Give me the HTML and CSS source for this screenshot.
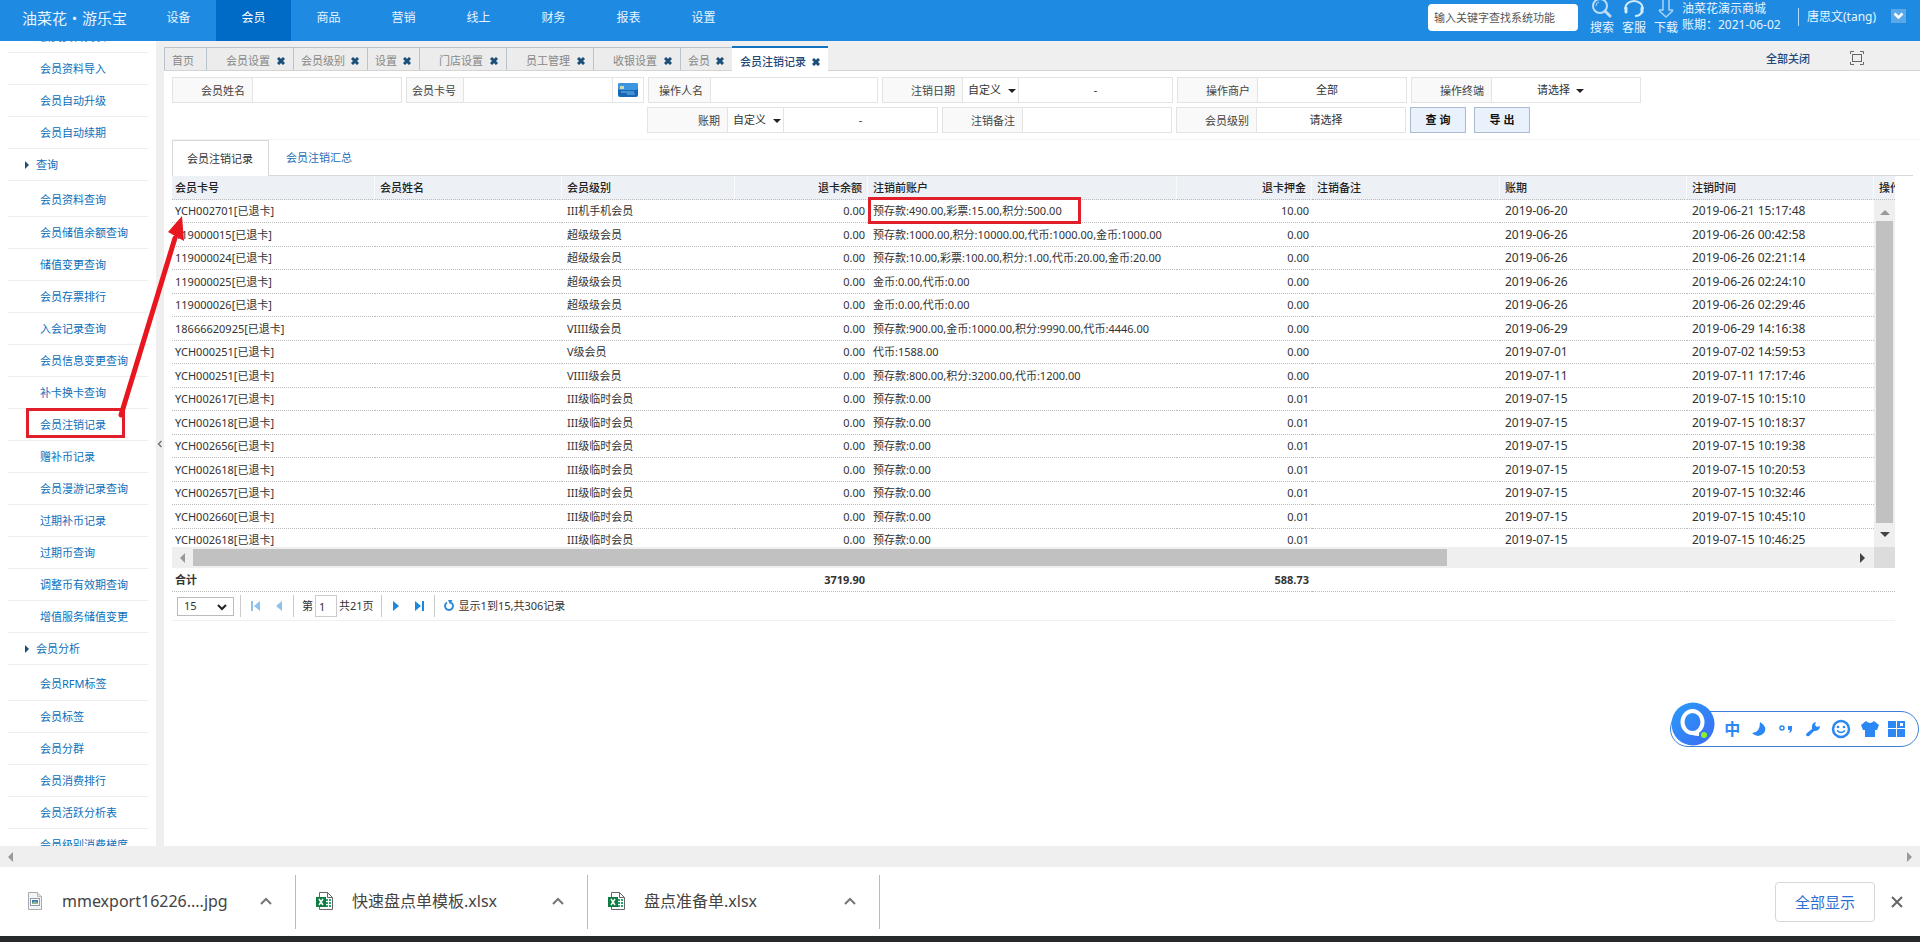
FILE: index.html
```html
<!DOCTYPE html>
<html lang="zh-CN">
<head>
<meta charset="utf-8">
<title>会员注销记录</title>
<link rel="stylesheet" href="styles.css">
</head>
<body>
<header class="topbar">
  <div class="logo">油菜花・游乐宝</div>
  <nav class="mainnav">
    <a href="#">设备</a><a href="#" class="on">会员</a><a href="#">商品</a><a href="#">营销</a><a href="#">线上</a><a href="#">财务</a><a href="#">报表</a><a href="#">设置</a>
  </nav>
  <input class="sysfind" type="text" placeholder="输入关键字查找系统功能" aria-label="查找系统功能">
  <div class="tools">
    <button type="button"><svg width="22" height="18" viewBox="0 0 22 18"><g fill="none" stroke="#b9ddf8"><circle cx="9" cy="6" r="7" stroke-width="2"/><path d="M14 11l5 5" stroke-width="3" stroke-linecap="round"/><path d="M5 6a4 4 0 0 1 3-4"/></g></svg>搜索</button>
    <button type="button"><svg width="22" height="18" viewBox="0 0 22 18"><g fill="none" stroke="#d5ebfb" stroke-width="2"><path d="M2 9a9 8 0 0 1 18 0"/><path d="M3 8v4M19 8v4" stroke-width="3" stroke-linecap="round"/><path d="M19 12q-2 4-7 4"/></g></svg>客服</button>
    <button type="button"><svg width="22" height="18" viewBox="0 0 22 18"><path d="M8 -2v12H4.500l0 1 6.500 6 6.500-6v-1H14V-2" fill="none" stroke="#a8d5f7" stroke-width="1.500" stroke-linejoin="round"/></svg>下载</button>
  </div>
  <div class="mall"><span>油菜花演示商城</span><span>账期：2021-06-02</span></div>
  <div class="user">唐思文(tang)</div>
  <button type="button" class="userdrop" aria-label="用户菜单"><svg width="15" height="14" viewBox="0 0 15 14"><path d="M3.500 4.500l4 4 4-4" fill="none" stroke="#fff" stroke-width="2.500"/></svg></button>
</header>

<div class="workspace">
  <aside class="side">
    <ul class="menu">
      <li><a href="#">会员资料列表</a></li>
      <li><a href="#">会员资料导入</a></li>
      <li><a href="#">会员自动升级</a></li>
      <li><a href="#">会员自动续期</a></li>
      <li class="group"><a href="#">查询</a></li>
      <li><a href="#">会员资料查询</a></li>
      <li><a href="#">会员储值余额查询</a></li>
      <li><a href="#">储值变更查询</a></li>
      <li><a href="#">会员存票排行</a></li>
      <li><a href="#">入会记录查询</a></li>
      <li><a href="#">会员信息变更查询</a></li>
      <li><a href="#">补卡换卡查询</a></li>
      <li><a href="#">会员注销记录</a></li>
      <li><a href="#">赠补币记录</a></li>
      <li><a href="#">会员漫游记录查询</a></li>
      <li><a href="#">过期补币记录</a></li>
      <li><a href="#">过期币查询</a></li>
      <li><a href="#">调整币有效期查询</a></li>
      <li><a href="#">增值服务储值变更</a></li>
      <li class="group"><a href="#">会员分析</a></li>
      <li><a href="#">会员RFM标签</a></li>
      <li><a href="#">会员标签</a></li>
      <li><a href="#">会员分群</a></li>
      <li><a href="#">会员消费排行</a></li>
      <li><a href="#">会员活跃分析表</a></li>
      <li><a href="#">会员级别消费梯度</a></li>
    </ul>
  </aside>
  <button type="button" class="splitter" aria-label="收起菜单"><svg width="6" height="8" viewBox="0 0 6 8"><path d="M4.500 1L1.500 4l3 3" fill="none" stroke="#777" stroke-width="1.500"/></svg></button>

  <main class="content">
    <div class="tabs">
      <div class="tab">首页</div>
      <div class="tab wide">会员设置<button type="button" aria-label="关闭"><svg width="8" height="8" viewBox="0 0 8 8"><path d="M1 1l6 6M7 1L1 7"/></svg></button></div>
      <div class="tab">会员级别<button type="button" aria-label="关闭"><svg width="8" height="8" viewBox="0 0 8 8"><path d="M1 1l6 6M7 1L1 7"/></svg></button></div>
      <div class="tab">设置<button type="button" aria-label="关闭"><svg width="8" height="8" viewBox="0 0 8 8"><path d="M1 1l6 6M7 1L1 7"/></svg></button></div>
      <div class="tab wide">门店设置<button type="button" aria-label="关闭"><svg width="8" height="8" viewBox="0 0 8 8"><path d="M1 1l6 6M7 1L1 7"/></svg></button></div>
      <div class="tab wide">员工管理<button type="button" aria-label="关闭"><svg width="8" height="8" viewBox="0 0 8 8"><path d="M1 1l6 6M7 1L1 7"/></svg></button></div>
      <div class="tab wide">收银设置<button type="button" aria-label="关闭"><svg width="8" height="8" viewBox="0 0 8 8"><path d="M1 1l6 6M7 1L1 7"/></svg></button></div>
      <div class="tab">会员<button type="button" aria-label="关闭"><svg width="8" height="8" viewBox="0 0 8 8"><path d="M1 1l6 6M7 1L1 7"/></svg></button></div>
      <div class="tab current">会员注销记录<button type="button" aria-label="关闭"><svg width="8" height="8" viewBox="0 0 8 8"><path d="M1 1l6 6M7 1L1 7"/></svg></button></div>
      <a href="#" class="closeall">全部关闭</a>
      <button type="button" class="full" aria-label="全屏"><svg width="14" height="14" viewBox="0 0 14 14"><g fill="none" stroke="#666"><path d="M.5 3V.5H4M10 .5h3.500V3M13.500 11v2.500H10M4 13.500H.5V11"/><rect x="2.500" y="3.500" width="9" height="7"/></g></svg></button>
    </div>

    <form class="filters">
      <div class="frow">
        <div class="field"><label class="l79" for="f1">会员姓名</label><input class="w150" id="f1" type="text"></div>
        <div class="field"><label class="l57" for="f2">会员卡号</label><input class="w150" id="f2" type="text"><button type="button" class="card" aria-label="读卡"><svg width="20" height="14" viewBox="0 0 20 14"><rect width="20" height="14" rx="2" fill="#1668b4"/><rect y="0" width="20" height="7" rx="2" fill="#3b97e0"/><rect x="2" y="3" width="4" height="3" fill="#d8d9a8"/><path d="M3 9h13M9 11h8" stroke="#73b9f0"/></svg></button></div>
        <div class="field"><label class="l62" for="f3">操作人名</label><input class="w168" id="f3" type="text"></div>
        <div class="field"><label class="l80" for="f4">注销日期</label><span class="pick mode"><select id="f4"><option>自定义</option></select></span><span class="range"><input type="text" aria-label="注销日期起"><span>-</span><input type="text" aria-label="注销日期止"></span></div>
        <div class="field"><label class="l80" for="f5">操作商户</label><button type="button" class="choose" id="f5">全部</button></div>
        <div class="field"><label class="l80" for="f6">操作终端</label><span class="pick terminal"><select id="f6"><option>请选择</option></select></span></div>
      </div>
      <div class="frow second">
        <div class="field"><label class="l80" for="f7">账期</label><span class="pick mode"><select id="f7"><option>自定义</option></select></span><span class="range"><input type="text" aria-label="账期起"><span>-</span><input type="text" aria-label="账期止"></span></div>
        <div class="field"><label class="l80" for="f8">注销备注</label><input class="w150" id="f8" type="text"></div>
        <div class="field"><label class="l80" for="f9">会员级别</label><button type="button" class="choose" id="f9">请选择</button></div>
        <div class="acts"><button type="button">查 询</button><button type="button">导 出</button></div>
      </div>
    </form>

    <div class="subtabs"><a href="#" class="on">会员注销记录</a><a href="#">会员注销汇总</a></div>

    <section class="grid">
      <table class="cols head">
        <colgroup><col class="c1"><col class="c2"><col class="c3"><col class="c4"><col class="c5"><col class="c6"><col class="c7"><col class="c8"><col class="c8"><col class="c9"></colgroup>
        <thead><tr><th>会员卡号</th><th>会员姓名</th><th>会员级别</th><th class="num">退卡余额</th><th>注销前账户</th><th class="num">退卡押金</th><th>注销备注</th><th>账期</th><th>注销时间</th><th>操作</th></tr></thead>
      </table>
      <div class="scroller">
        <div class="view">
          <table class="cols rows">
            <colgroup><col class="c1"><col class="c2"><col class="c3"><col class="c4"><col class="c5"><col class="c6"><col class="c7"><col class="c8"><col class="c8"></colgroup>
            <tbody>
              <tr><td>YCH002701[已退卡]</td><td></td><td>III机手机会员</td><td class="num">0.00</td><td>预存款:490.00,彩票:15.00,积分:500.00</td><td class="num">10.00</td><td></td><td class="date">2019-06-20</td><td class="date">2019-06-21 15:17:48</td></tr>
              <tr><td>119000015[已退卡]</td><td></td><td>超级级会员</td><td class="num">0.00</td><td>预存款:1000.00,积分:10000.00,代币:1000.00,金币:1000.00</td><td class="num">0.00</td><td></td><td class="date">2019-06-26</td><td class="date">2019-06-26 00:42:58</td></tr>
              <tr><td>119000024[已退卡]</td><td></td><td>超级级会员</td><td class="num">0.00</td><td>预存款:10.00,彩票:100.00,积分:1.00,代币:20.00,金币:20.00</td><td class="num">0.00</td><td></td><td class="date">2019-06-26</td><td class="date">2019-06-26 02:21:14</td></tr>
              <tr><td>119000025[已退卡]</td><td></td><td>超级级会员</td><td class="num">0.00</td><td>金币:0.00,代币:0.00</td><td class="num">0.00</td><td></td><td class="date">2019-06-26</td><td class="date">2019-06-26 02:24:10</td></tr>
              <tr><td>119000026[已退卡]</td><td></td><td>超级级会员</td><td class="num">0.00</td><td>金币:0.00,代币:0.00</td><td class="num">0.00</td><td></td><td class="date">2019-06-26</td><td class="date">2019-06-26 02:29:46</td></tr>
              <tr><td>18666620925[已退卡]</td><td></td><td>VIIII级会员</td><td class="num">0.00</td><td>预存款:900.00,金币:1000.00,积分:9990.00,代币:4446.00</td><td class="num">0.00</td><td></td><td class="date">2019-06-29</td><td class="date">2019-06-29 14:16:38</td></tr>
              <tr><td>YCH000251[已退卡]</td><td></td><td>V级会员</td><td class="num">0.00</td><td>代币:1588.00</td><td class="num">0.00</td><td></td><td class="date">2019-07-01</td><td class="date">2019-07-02 14:59:53</td></tr>
              <tr><td>YCH000251[已退卡]</td><td></td><td>VIIII级会员</td><td class="num">0.00</td><td>预存款:800.00,积分:3200.00,代币:1200.00</td><td class="num">0.00</td><td></td><td class="date">2019-07-11</td><td class="date">2019-07-11 17:17:46</td></tr>
              <tr><td>YCH002617[已退卡]</td><td></td><td>III级临时会员</td><td class="num">0.00</td><td>预存款:0.00</td><td class="num">0.01</td><td></td><td class="date">2019-07-15</td><td class="date">2019-07-15 10:15:10</td></tr>
              <tr><td>YCH002618[已退卡]</td><td></td><td>III级临时会员</td><td class="num">0.00</td><td>预存款:0.00</td><td class="num">0.01</td><td></td><td class="date">2019-07-15</td><td class="date">2019-07-15 10:18:37</td></tr>
              <tr><td>YCH002656[已退卡]</td><td></td><td>III级临时会员</td><td class="num">0.00</td><td>预存款:0.00</td><td class="num">0.01</td><td></td><td class="date">2019-07-15</td><td class="date">2019-07-15 10:19:38</td></tr>
              <tr><td>YCH002618[已退卡]</td><td></td><td>III级临时会员</td><td class="num">0.00</td><td>预存款:0.00</td><td class="num">0.01</td><td></td><td class="date">2019-07-15</td><td class="date">2019-07-15 10:20:53</td></tr>
              <tr><td>YCH002657[已退卡]</td><td></td><td>III级临时会员</td><td class="num">0.00</td><td>预存款:0.00</td><td class="num">0.01</td><td></td><td class="date">2019-07-15</td><td class="date">2019-07-15 10:32:46</td></tr>
              <tr><td>YCH002660[已退卡]</td><td></td><td>III级临时会员</td><td class="num">0.00</td><td>预存款:0.00</td><td class="num">0.01</td><td></td><td class="date">2019-07-15</td><td class="date">2019-07-15 10:45:10</td></tr>
              <tr><td>YCH002618[已退卡]</td><td></td><td>III级临时会员</td><td class="num">0.00</td><td>预存款:0.00</td><td class="num">0.01</td><td></td><td class="date">2019-07-15</td><td class="date">2019-07-15 10:46:25</td></tr>
            </tbody>
          </table>
        </div>
        <div class="vbar"><i class="up"></i><b></b><i class="down"></i></div>
        <div class="hbar"><i class="left"></i><div class="track"><b></b></div><i class="right dark"></i></div>
        <div class="corner"></div>
      </div>
      <table class="cols foot">
        <colgroup><col class="c1"><col class="c2"><col class="c3"><col class="c4"><col class="c5"><col class="c6"><col class="c7"><col class="c8"><col class="c8"><col class="c9"></colgroup>
        <tbody><tr><td>合计</td><td></td><td></td><td class="num">3719.90</td><td></td><td class="num">588.73</td><td></td><td></td><td></td><td></td></tr></tbody>
      </table>
      <div class="pager">
        <span class="size"><select aria-label="每页条数"><option>15</option></select><svg width="10" height="8" viewBox="0 0 10 8"><path d="M1 2l4 4 4-4" fill="none" stroke="#222" stroke-width="2"/></svg></span>
        <span class="nav off"><button type="button" aria-label="第一页"><svg width="10" height="10" viewBox="0 0 10 10"><path d="M1 0h2v10H1zM10 0v10L4 5z"/></svg></button><button type="button" aria-label="上一页"><svg width="10" height="10" viewBox="0 0 10 10"><path d="M8 0v10L2 5z"/></svg></button></span>
        <label class="page">第<input type="text" value="1">共21页</label>
        <span class="nav"><button type="button" aria-label="下一页"><svg width="10" height="10" viewBox="0 0 10 10"><path d="M2 0v10l6-5z"/></svg></button><button type="button" aria-label="最后一页"><svg width="10" height="10" viewBox="0 0 10 10"><path d="M0 0v10l6-5zM7 0h2v10H7z"/></svg></button></span>
        <button type="button" class="reload" aria-label="刷新"><svg width="12" height="12" viewBox="0 0 12 12"><path d="M4 2.500a4 4 0 1 0 4 0" fill="none" stroke="#2c8ad8" stroke-width="2"/><path d="M5 0h4.500L7 4.500z" fill="#2c8ad8"/></svg></button>
        <span>显示1到15,共306记录</span>
      </div>
    </section>
  </main>
</div>

<div class="pagebar"><i class="left"></i><i class="right"></i></div>

<footer class="downloads">
  <div class="file">
    <svg width="18" height="20" viewBox="0 0 18 20"><path d="M2.500 1.500h9l4 4v13h-13z" fill="#f4f4f4" stroke="#aaa"/><path d="M11.500 1.500v4h4" fill="#ddd" stroke="#bbb"/><rect x="4.500" y="7.500" width="9" height="7" fill="#fff" stroke="#8a9bb0"/><rect x="6" y="9" width="6" height="4" fill="#3b78b5"/><path d="M6 12l3-2 3 2v1H6z" fill="#8fb98b"/></svg>
    <span>mmexport16226....jpg</span>
    <button type="button" aria-label="更多"><svg width="12" height="8" viewBox="0 0 12 8"><path d="M1 7l5-5 5 5"/></svg></button>
  </div>
  <div class="file">
    <svg width="18" height="20" viewBox="0 0 18 20"><path d="M3.500 1.500h8l5 5v12h-13z" fill="#fff" stroke="#666"/><path d="M11.500 1.500v5h5" fill="none" stroke="#666"/><path d="M10 8h2v2h-2zM13 8h2v2h-2zM10 11h2v2h-2zM13 11h2v2h-2zM10 14h2v2h-2zM13 14h2v2h-2z" fill="#26a46a"/><rect y="6" width="10" height="10" fill="#107c41"/><path d="M3 8l4 6M7 8l-4 6" stroke="#fff" stroke-width="1.500"/></svg>
    <span>快速盘点单模板.xlsx</span>
    <button type="button" aria-label="更多"><svg width="12" height="8" viewBox="0 0 12 8"><path d="M1 7l5-5 5 5"/></svg></button>
  </div>
  <div class="file">
    <svg width="18" height="20" viewBox="0 0 18 20"><path d="M3.500 1.500h8l5 5v12h-13z" fill="#fff" stroke="#666"/><path d="M11.500 1.500v5h5" fill="none" stroke="#666"/><path d="M10 8h2v2h-2zM13 8h2v2h-2zM10 11h2v2h-2zM13 11h2v2h-2zM10 14h2v2h-2zM13 14h2v2h-2z" fill="#26a46a"/><rect y="6" width="10" height="10" fill="#107c41"/><path d="M3 8l4 6M7 8l-4 6" stroke="#fff" stroke-width="1.500"/></svg>
    <span>盘点准备单.xlsx</span>
    <button type="button" aria-label="更多"><svg width="12" height="8" viewBox="0 0 12 8"><path d="M1 7l5-5 5 5"/></svg></button>
  </div>
  <button type="button" class="showall">全部显示</button>
  <button type="button" class="dismiss" aria-label="关闭"><svg width="12" height="12" viewBox="0 0 12 12"><path d="M1 1l10 10M11 1L1 11" stroke="#666" stroke-width="2"/></svg></button>
</footer>
<div class="taskbar"></div>

<div class="ime">
  <svg class="imelogo" width="44" height="44" viewBox="0 0 44 44"><defs><linearGradient id="q" x1="0" y1="0" x2="1" y2="1"><stop offset="0" stop-color="#2a9df8"/><stop offset="1" stop-color="#3b6af5"/></linearGradient></defs><circle cx="22" cy="22" r="21.500" fill="url(#q)"/><ellipse cx="21.500" cy="20" rx="10" ry="11" fill="none" stroke="#fff" stroke-width="4"/><path d="M15 30q6 4 13 4v-5z" fill="#fff"/><circle cx="33" cy="33" r="4" fill="#3a73f0"/><circle cx="33" cy="33" r="3" fill="#8dee2a"/></svg>
  <span class="zh">中</span>
  <svg width="18" height="18" viewBox="0 0 18 18"><path d="M10 2q8 5 4 11-6 6-12 0 8 0 8-11z"/></svg>
  <svg width="18" height="18" viewBox="0 0 18 18"><circle cx="5" cy="8" r="2" fill="none" stroke="#2b87f3" stroke-width="1.500"/><path d="M11 6h4v3q0 3-3 4 1-2 1-3h-2z"/></svg>
  <svg width="18" height="18" viewBox="0 0 18 18"><path d="M12 2l-1 3 2 2 3-1q0 5-6 5l-5 5q-2 1-3-1 0-1 1-2l5-4q-1-6 4-7z"/></svg>
  <svg width="20" height="20" viewBox="0 0 20 20"><circle cx="10" cy="10" r="8" fill="none" stroke="#2b87f3" stroke-width="2.500"/><circle cx="7" cy="8" r="1.300"/><circle cx="13" cy="8" r="1.300"/><path d="M6 11.500q4 4 8 0" fill="none" stroke="#2b87f3" stroke-width="1.500"/></svg>
  <svg width="18" height="18" viewBox="0 0 18 18"><path d="M5 1q4 4 8 0l5 4-2 5h-2v7H4v-7H2L0 5z"/></svg>
  <svg width="18" height="18" viewBox="0 0 18 18"><path d="M0 1h8v7H0zM9 1h8v7H9zM0 9h8v8H0zM9 9h8v8H9z"/><path d="M12 3h3v3h-3z" fill="#fff"/></svg>
</div>

<svg class="marks" width="1090" height="450" viewBox="0 0 1090 450">
  <g fill="none" stroke="#e01f2b" stroke-width="3"><rect x="27.500" y="409.500" width="96" height="27"/><rect x="869.500" y="198.500" width="210" height="24"/></g>
  <path d="M121 415L175 238" stroke="#e8161f" stroke-width="5" stroke-linecap="round"/>
  <path d="M182 216l2 25-16-9z" fill="#e8161f"/>
</svg>
</body>
</html>
```
FILE: styles.css
```css
* { box-sizing: border-box; }
body {
  margin: 0;
  height: 100vh;
  display: flex;
  flex-direction: column;
  overflow: hidden;
  background: #fff;
  color: #333;
  font: 11px/16px "Noto Sans", "Noto Sans CJK SC", sans-serif;
}
a { color: inherit; text-decoration: none; }
button, input, select { font: inherit; color: inherit; margin: 0; padding: 0; border: 0; background: none; border-radius: 0; }
select { appearance: none; }
svg { display: block; flex: none; }

/* top bar */
.topbar { flex: none; height: 41px; display: flex; background: #1e8ae2; color: #e6f4ff; font-size: 12px; overflow: hidden; }
.logo { width: 141px; padding: 9px 0 0 22px; font-size: 15px; line-height: 18px; white-space: nowrap; }
.mainnav { display: flex; flex: 1; }
.mainnav a { width: 75px; line-height: 35px; text-align: center; }
.mainnav .on { background: #006bc7; color: #fff; }
.sysfind { width: 150px; height: 27px; margin-top: 4px; padding: 0 6px; border-radius: 4px; background: #fff; color: #555; font-size: 11px; }
.sysfind::placeholder { color: #555; }
.tools { display: flex; gap: 8px; margin-left: 12px; }
.tools button { width: 24px; display: flex; flex-direction: column; align-items: center; gap: 2px; font-size: 12px; line-height: 16px; white-space: nowrap; }
.mall { width: 116px; margin-left: 4px; display: flex; flex-direction: column; white-space: nowrap; padding-top: 1px; }
.user { align-self: flex-start; margin-top: 8px; padding-left: 8px; width: 91px; border-left: 1px solid #b5dcfa; font-size: 12px; line-height: 18px; }
.userdrop { width: 15px; height: 14px; margin: 9px 14px 0 2px; background: #5ba8e9; }

/* work area */
.workspace { flex: 1; min-height: 0; display: flex; }
.side { width: 156px; overflow: hidden; }
.menu { list-style: none; margin: -20px 8px 0; padding: 0; color: #0b6fba; }
.menu li { height: 32px; padding-left: 32px; border-bottom: 1px solid #eee; line-height: 32px; white-space: nowrap; }
.menu .group { position: relative; padding-left: 28px; }
.menu .group::before { content: ""; position: absolute; left: 17px; top: 12px; border: 4px solid transparent; border-left-color: #1c4f78; border-right: 0; }
.menu .group + li { height: 36px; line-height: 38px; }
.splitter { width: 8px; background: #efefef; display: flex; align-items: center; justify-content: center; }
.content { flex: 1; min-width: 0; }

.tabs { height: 30px; padding-top: 5px; display: flex; background: #efefef; border-bottom: 1px solid #d4d4d4; }
.tab { display: flex; align-items: center; gap: 6px; margin-top: 1px; padding: 4px 8px 0 7px; border: 1px solid #b9c3cb; border-width: 1px 0 0 1px; color: #888; background: #ececec; white-space: nowrap; }
.tab:first-child { width: 42px; }
.tab.wide { padding-left: 19px; gap: 7px; }
.tab button { stroke: #1c4f78; stroke-width: 3; }
.tab.current { margin: 0 0 -1px; padding-left: 8px; border: 0; border-top: 2px solid #1273c2; background: #fff; color: #23487a; font-weight: 500; }
.closeall { margin-left: auto; color: #23487a; line-height: 26px; font-weight: 500; }
.full { width: 14px; margin: 0 56px 0 40px; }

/* filters */
.filters { margin-left: 8px; padding: 6px 0; display: flex; flex-direction: column; gap: 4px; border-bottom: 1px solid #f3f3f3; }
.frow { display: flex; gap: 4px; }
.second { padding-left: 475px; }
.field { display: flex; height: 26px; border: 1px solid #e3e3e3; background: #f9f9f9; }
.field label { padding-right: 7px; line-height: 25px; text-align: right; color: #444; }
.field input, .field > button, .field > span { background: #fff; border-left: 1px solid #e3e3e3; }
.l79, .l80 { width: 79px; }
.l57 { width: 56px; }
.l62 { width: 61px; }
.w150, .choose, .terminal { width: 149px; }
.w168 { width: 167px; }
.field > .choose { padding-right: 10px; }
.card { width: 31px; display: flex; align-items: center; justify-content: center; }
.pick { position: relative; }
.pick select { width: 100%; height: 24px; padding-left: 5px; }
.pick::after { content: ""; position: absolute; right: 2px; top: 11px; border: 4px solid transparent; border-top-color: #222; border-bottom: 0; pointer-events: none; }
.mode { width: 56px; }
.terminal select { padding-left: 45px; }
.terminal::after { right: 56px; }
.range { width: 154px; display: flex; align-items: center; }
.field .range input { flex: 1; min-width: 0; border: 0; background: none; }
.acts { display: flex; gap: 8px; }
.acts button { width: 56px; height: 26px; border: 1px solid #a9b9cf; background: #e9f1fd; color: #111; font-weight: 700; }

.subtabs { display: flex; height: 36px; margin: 0 7px 0 8px; border-bottom: 1px solid #d5d9de; color: #1c6fb8; }
.subtabs a { padding: 0 17px; line-height: 36px; }
.subtabs .on { height: 36px; padding: 0 15px 0 14px; border: 1px solid #d5d9de; border-bottom: 0; background: #fff; color: #333; }

/* grid */
.grid { margin: 0 25px 0 8px; border-bottom: 1px solid #f0f0f0; }
.cols { width: 100%; table-layout: fixed; border-collapse: separate; border-spacing: 0; }
.cols th, .cols td { height: 24px; padding: 0 3px 0 5px; border-bottom: 1px dotted #bbb; line-height: 16px; text-align: left; white-space: nowrap; overflow: hidden; }
.cols th { background: #edf1f6; border-right: 1px solid #f8fafc; font-weight: 500; color: #222; }
.cols th:first-child, .cols td:first-child { padding-left: 3px; }
.cols th:last-child { border-right: 0; padding-right: 0; }
.cols th.num { padding-right: 5px; }
.cols .num { text-align: right; }
.rows tr:nth-child(odd) td { height: 23px; }
.cols .date { font-size: 12px; }
.c1 { width: 203px; }
.c2 { width: 187px; }
.c3 { width: 173px; }
.c4 { width: 133px; }
.c5 { width: 309px; }
.c6 { width: 135px; }
.c7 { width: 188px; }
.c8 { width: 187px; }
.c9 { width: 21px; }
.foot td { font-weight: 700; }

.scroller { display: grid; grid-template: 347px 21px / 1fr 21px; }
.view { overflow: hidden; min-width: 0; }
.vbar, .hbar, .pagebar { display: flex; align-items: center; justify-content: space-between; background: #efefef; }
.vbar { flex-direction: column; padding: 10px 0; }
.vbar b { flex: 1; width: 17px; margin: 6px 0 9px; background: #c1c1c1; }
.hbar { padding: 0 9px 0 8px; }
.track { flex: 1; height: 17px; margin: 0 6px 0 8px; }
.track b { display: block; width: 75.500%; height: 100%; background: #c1c1c1; }
.corner { background: #dcdcdc; }
.vbar i, .hbar i, .pagebar i { border: 5px solid transparent; }
.up { border-top-width: 0 !important; border-bottom-color: #999 !important; }
.down { border-bottom-width: 0 !important; border-top-color: #444 !important; }
.left { border-left-width: 0 !important; border-right-color: #999 !important; }
.right { border-right-width: 0 !important; border-left-color: #999 !important; }
.dark { border-left-color: #444 !important; }

.pager { display: flex; align-items: center; height: 28px; padding-left: 5px; }
.pager > span:last-child { margin-left: 4px; }
.size { position: relative; }
.size select { width: 57px; height: 19px; padding-left: 6px; border: 1px solid #bbb; }
.size svg { position: absolute; right: 7px; top: 6px; pointer-events: none; }
.nav { display: flex; gap: 14px; height: 22px; align-items: center; padding: 0 0 0 9px; border-left: 1px solid #ccc; fill: #1b87e0; margin-left: 6px; }
.nav.off { fill: #8fc1ea; padding-right: 9px; }
.page { display: flex; align-items: center; height: 22px; padding: 0 1px 0 8px; border-left: 1px solid #ccc; }
.page input { width: 22px; height: 22px; margin: 0 2px; padding-left: 3px; border: 1px solid #ccc; }
.reload { height: 22px; margin-left: 9px; padding-left: 8px; border-left: 1px solid #ccc; }

/* browser chrome */
.pagebar { flex: none; height: 21px; padding: 0 8px; }
.downloads { flex: none; height: 69px; display: flex; align-items: center; font-size: 16px; line-height: 24px; color: #444; }
.file { width: 292px; height: 54px; display: flex; align-items: center; padding: 0 23px 2px 20px; border-right: 1px solid #bbb; }
.file:first-child { width: 296px; padding-left: 26px; }
.file span { flex: 1; margin-left: 18px; white-space: nowrap; }
.file button { fill: none; stroke: #777; stroke-width: 2; }
.showall { width: 100px; height: 40px; margin-left: auto; border: 1px solid #d4d7dc; border-radius: 4px; color: #2f6fd0; font-size: 15px; }
.dismiss { margin: 0 17px 0 16px; }
.taskbar { flex: none; height: 6px; background: #262a2b; }

/* floating input-method bar */
.ime { position: absolute; right: 1px; top: 711px; width: 249px; height: 36px; display: flex; align-items: center; justify-content: space-between; padding: 0 12px 0 0; border: 1px solid #3d7fd8; border-radius: 18px; background: #fff; fill: #2b87f3; color: #2b87f3; }
.imelogo { align-self: flex-end; }
.zh { font-size: 16px; line-height: 20px; font-weight: 700; }

.marks { position: absolute; left: 0; top: 0; pointer-events: none; }
```
